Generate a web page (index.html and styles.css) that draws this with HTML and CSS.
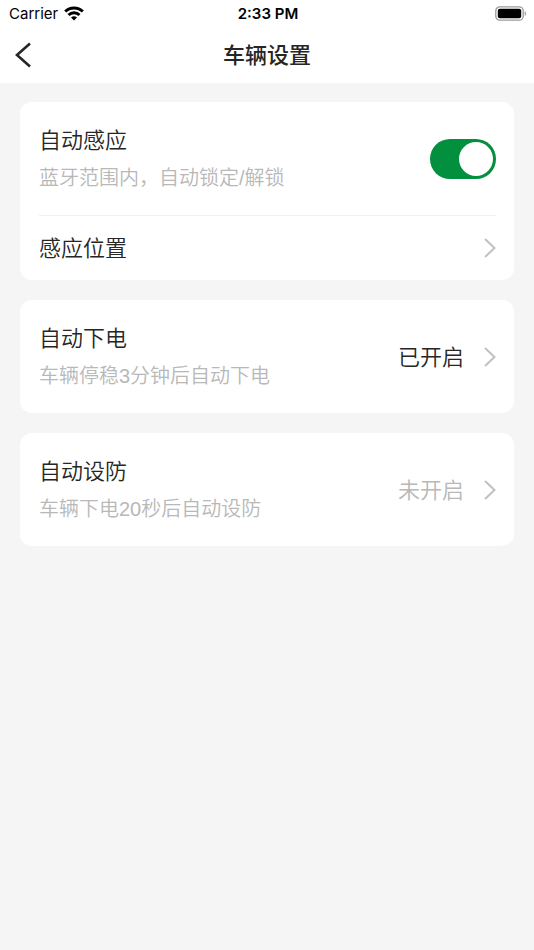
FILE: index.html
```html
<!DOCTYPE html>
<html lang="zh-CN">
<head>
  <meta charset="UTF-8">
  <meta name="viewport" content="width=device-width, initial-scale=1.0">
  <title>车辆设置</title>
  <link rel="stylesheet" href="styles.css">
</head>
<body>
  <header>
    <div class="status-bar">
      <div class="carrier">
        <span>Carrier</span>
        <svg class="wifi" width="20" height="15" viewBox="0 0 20 15" aria-hidden="true">
          <g fill="none" stroke="#000" stroke-width="3">
            <path d="M1.200 5.500a12.600 12.600 0 0 1 17.600 0"/>
            <path d="M4.500 9a7.900 7.900 0 0 1 11 0"/>
          </g>
          <path d="M10 14.600l-3-3a4.300 4.300 0 0 1 6 0z"/>
        </svg>
      </div>
      <span class="time">2:33 PM</span>
      <svg class="battery" width="32" height="15" viewBox="0 0 32 15" aria-hidden="true">
        <rect x="0.8" y="0.8" width="27.4" height="13.4" rx="4" fill="none" stroke="#999" stroke-width="1.3"/>
        <rect x="2.8" y="2.8" width="23.4" height="9.4" rx="2"/>
        <path d="M29.700 5.200c1.800.7 1.800 3.900 0 4.600z" fill="#999"/>
      </svg>
    </div>
    <nav class="nav-bar">
      <button class="back" type="button" aria-label="返回">
        <svg width="16" height="26" viewBox="0 0 16 26" aria-hidden="true">
          <path d="M15 1.500L2 13l13 11.500" fill="none" stroke="#262626" stroke-width="2.600"/>
        </svg>
      </button>
      <h1>车辆设置</h1>
    </nav>
  </header>

  <main>
    <section class="card">
      <label class="row tall">
        <span class="text">
          <span class="name">自动感应</span>
          <span class="desc">蓝牙范围内，自动锁定/解锁</span>
        </span>
        <input class="switch" type="checkbox" role="switch" checked>
      </label>
      <a class="row" href="#position">
        <span class="text">
          <span class="name">感应位置</span>
        </span>
        <svg class="arrow" width="12" height="20" viewBox="0 0 12 20" aria-hidden="true"><path d="M1 1l9.500 9L1 19"/></svg>
      </a>
    </section>

    <section class="card">
      <a class="row tall" href="#power-off">
        <span class="text">
          <span class="name">自动下电</span>
          <span class="desc">车辆停稳3分钟后自动下电</span>
        </span>
        <span class="value">已开启</span>
        <svg class="arrow" width="12" height="20" viewBox="0 0 12 20" aria-hidden="true"><path d="M1 1l9.500 9L1 19"/></svg>
      </a>
    </section>

    <section class="card">
      <a class="row tall" href="#guard">
        <span class="text">
          <span class="name">自动设防</span>
          <span class="desc">车辆下电20秒后自动设防</span>
        </span>
        <span class="value off">未开启</span>
        <svg class="arrow" width="12" height="20" viewBox="0 0 12 20" aria-hidden="true"><path d="M1 1l9.500 9L1 19"/></svg>
      </a>
    </section>
  </main>
</body>
</html>
```

FILE: styles.css
```css
* {
  box-sizing: border-box;
}

body {
  margin: 0;
  min-height: 100vh;
  background: #f5f5f5;
  color: #262626;
  font-family: "Liberation Sans", "Noto Sans CJK SC", sans-serif;
}

header {
  background: #fff;
}

.status-bar {
  display: grid;
  grid-template-columns: 1fr auto 1fr;
  align-items: center;
  height: 27px;
  padding: 0 7px 0 9px;
  color: #000;
  font-family: Inter, sans-serif;
  font-size: 15px;
}

.carrier {
  display: flex;
  align-items: center;
  gap: 6px;
}

.time {
  font-weight: 600;
}

.battery {
  justify-self: end;
}

.nav-bar {
  display: grid;
  grid-template-columns: 1fr auto 1fr;
  align-items: center;
  height: 56px;
  padding: 0 15px;
}

.back {
  display: flex;
  justify-self: start;
  padding: 0;
  border: none;
  background: none;
  cursor: pointer;
}

h1 {
  margin: 0;
  padding-top: 2px;
  font-size: 22px;
  font-weight: 500;
  line-height: 32px;
}

main {
  display: flex;
  flex-direction: column;
  gap: 20px;
  padding: 19px 20px;
}

.card {
  padding: 0 18px 0 19px;
  border-radius: 12px;
  background: #fff;
}

.row {
  display: flex;
  align-items: center;
  min-height: 65px;
  color: inherit;
  text-decoration: none;
}

.row.tall {
  min-height: 113px;
}

.row + .row {
  border-top: 1px solid #f0f0f0;
}

.text {
  display: flex;
  flex: 1;
  flex-direction: column;
  gap: 5px;
}

.text,
.value {
  padding-top: 2px;
}

.name,
.value {
  font-size: 22px;
  font-weight: 350;
  line-height: 32px;
}

.desc {
  color: #b8b8b8;
  font-size: 20px;
  font-weight: 350;
  line-height: 32px;
}

.value.off {
  color: #b8b8b8;
}

.arrow {
  margin-left: 20px;
  fill: none;
  stroke: #c0c0c0;
  stroke-width: 2;
}

.switch {
  display: flex;
  appearance: none;
  width: 66px;
  height: 40px;
  margin: 0;
  padding: 3px;
  border-radius: 20px;
  background: #ccc;
  cursor: pointer;
}

.switch::before {
  content: "";
  width: 34px;
  height: 34px;
  border-radius: 50%;
  background: #fff;
}

.switch:checked {
  justify-content: flex-end;
  background: #028f3e;
}
```
